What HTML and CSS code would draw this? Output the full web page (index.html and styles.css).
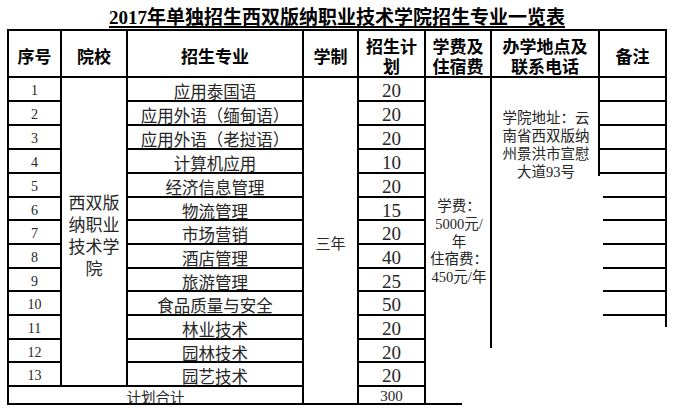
FILE: index.html
```html
<!DOCTYPE html>
<html lang="zh-CN">
<head>
<meta charset="utf-8">
<title>2017年单独招生西双版纳职业技术学院招生专业一览表</title>
<link rel="stylesheet" href="styles.css">
</head>
<body>
<div class="page">
  <h1 class="title"><span class="title-text">2017年单独招生西双版纳职业技术学院招生专业一览表</span></h1>
  <table class="plan">
    <colgroup>
      <col class="c-no"><col class="c-school"><col class="c-major"><col class="c-years"><col class="c-quota"><col class="c-fee"><col class="c-addr"><col class="c-note">
    </colgroup>
    <thead>
      <tr class="head">
        <th class="first">序号</th>
        <th>院校</th>
        <th>招生专业</th>
        <th>学制</th>
        <th>招生计<br>划</th>
        <th>学费及<br>住宿费</th>
        <th>办学地点及<br>联系电话</th>
        <th>备注</th>
      </tr>
    </thead>
    <tbody>
      <tr>
        <td class="no first">1</td>
        <td class="school" rowspan="13">西双版<br>纳职业<br>技术学<br>院</td>
        <td class="major">应用泰国语</td>
        <td class="years" rowspan="14">三年</td>
        <td class="quota">20</td>
        <td class="fee" rowspan="14">学费：<br>5000元/<br>年<br>住宿费：<br>450元/年</td>
        <td class="addr" rowspan="14">学院地址：云<br>南省西双版纳<br>州景洪市宣慰<br>大道93号</td>
        <td class="note"></td>
      </tr>
      <tr>
        <td class="no first">2</td>
        <td class="major">应用外语（缅甸语）</td>
        <td class="quota">20</td>
        <td class="note"></td>
      </tr>
      <tr>
        <td class="no first">3</td>
        <td class="major">应用外语（老挝语）</td>
        <td class="quota">20</td>
        <td class="note"></td>
      </tr>
      <tr>
        <td class="no first">4</td>
        <td class="major">计算机应用</td>
        <td class="quota">10</td>
        <td class="note"></td>
      </tr>
      <tr>
        <td class="no first">5</td>
        <td class="major">经济信息管理</td>
        <td class="quota">20</td>
        <td class="note note-gap"></td>
      </tr>
      <tr class="short">
        <td class="no first">6</td>
        <td class="major">物流管理</td>
        <td class="quota">15</td>
        <td class="note note-gap"></td>
      </tr>
      <tr>
        <td class="no first">7</td>
        <td class="major">市场营销</td>
        <td class="quota">20</td>
        <td class="note note-gap"></td>
      </tr>
      <tr>
        <td class="no first">8</td>
        <td class="major">酒店管理</td>
        <td class="quota">40</td>
        <td class="note note-gap"></td>
      </tr>
      <tr class="short">
        <td class="no first">9</td>
        <td class="major">旅游管理</td>
        <td class="quota">25</td>
        <td class="note note-gap"></td>
      </tr>
      <tr>
        <td class="no first">10</td>
        <td class="major">食品质量与安全</td>
        <td class="quota">50</td>
        <td class="note note-gap"></td>
      </tr>
      <tr>
        <td class="no first">11</td>
        <td class="major">林业技术</td>
        <td class="quota">20</td>
        <td class="note note-stub"></td>
      </tr>
      <tr class="short">
        <td class="no first">12</td>
        <td class="major">园林技术</td>
        <td class="quota">20</td>
        <td class="note note-none"></td>
      </tr>
      <tr>
        <td class="no first">13</td>
        <td class="major">园艺技术</td>
        <td class="quota">20</td>
        <td class="note note-none"></td>
      </tr>
      <tr class="total">
        <td class="total-label first" colspan="3"><div class="clip clip-label">计划合计</div></td>
        <td class="total-quota"><div class="clip clip-num">300</div></td>
      </tr>
    </tbody>
  </table>
</div>
</body>
</html>
```

FILE: styles.css
```css
html, body {
  margin: 0;
  padding: 0;
  background: #ffffff;
}

body {
  font-family: "Liberation Serif", "Noto Sans CJK SC", serif;
  color: #262626;
}

.page {
  width: 660px;
  padding-left: 7px;
}

.title {
  margin: 0;
  box-sizing: border-box;
  height: 29px;
  padding-top: 7px;
  line-height: 22px;
  font-size: 19px;
  font-weight: bold;
  text-align: center;
  color: #000000;
}

.title-text {
  text-decoration: underline;
  text-decoration-thickness: 1.5px;
  text-underline-offset: 2px;
}

.plan {
  table-layout: fixed;
  width: 660px;
  border-collapse: separate;
  border-spacing: 0;
}

.c-no { width: 55px; }
.c-school { width: 66px; }
.c-major { width: 176px; }
.c-years { width: 55px; }
.c-quota { width: 67px; }
.c-fee { width: 66px; }
.c-addr { width: 108px; }
.c-note { width: 67px; }

.plan th,
.plan td {
  padding: 0;
  border: 0 solid #000000;
  border-right-width: 2px;
  border-bottom-width: 2px;
  text-align: center;
}

.plan .first {
  border-left-width: 2px;
}

.head {
  height: 49px;
}

.head th {
  border-top-width: 2px;
  padding-top: 4px;
  vertical-align: middle;
  font-family: "Noto Sans CJK SC", sans-serif;
  font-weight: bold;
  font-size: 17px;
  line-height: 20px;
  color: #000000;
}

.plan tbody tr {
  height: 24px;
}

.plan tbody tr.short {
  height: 23px;
}

.plan tbody tr.total {
  height: 18px;
}

.plan td {
  vertical-align: top;
  padding-top: 5px;
  line-height: 16px;
  white-space: nowrap;
}

.no {
  font-size: 14px;
}

.major {
  font-family: "Noto Sans CJK SC", sans-serif;
  font-size: 16.5px;
}

.quota {
  font-size: 19px;
}

.plan td.school {
  vertical-align: middle;
  padding-top: 7px;
  font-family: "Noto Sans CJK SC", sans-serif;
  font-size: 17px;
  line-height: 22px;
}

.plan td.years {
  vertical-align: middle;
  padding-top: 5px;
  font-family: "Noto Sans CJK SC", sans-serif;
  font-size: 15px;
}

.plan td.fee {
  vertical-align: middle;
  padding-top: 2px;
  font-size: 14.5px;
  line-height: 17.75px;
  border-right-width: 0;
  border-bottom-width: 0;
  background-image: linear-gradient(#000000, #000000), linear-gradient(#000000, #000000);
  background-position: right top, left bottom;
  background-size: 2px 270px, 36px 2px;
  background-repeat: no-repeat;
}

.plan td.addr {
  vertical-align: top;
  padding-top: 31px;
  font-size: 14.5px;
  line-height: 18px;
  border-right-width: 0;
  border-bottom-width: 0;
  background-image: linear-gradient(#000000, #000000);
  background-position: right top;
  background-size: 2px 98px;
  background-repeat: no-repeat;
}

.plan td.note {
  padding: 0;
}

.plan td.note-gap {
  border-bottom-width: 0;
  background-image: linear-gradient(#000000, #000000);
  background-position: right bottom;
  background-size: 62px 2px;
  background-repeat: no-repeat;
}

.plan td.note-stub {
  border-right-width: 0;
  border-bottom-width: 0;
  background-image: linear-gradient(#000000, #000000);
  background-position: right top;
  background-size: 2px 11px;
  background-repeat: no-repeat;
}

.plan td.note-none {
  border-width: 0;
}

.plan td.total-label,
.plan td.total-quota {
  padding: 0;
  vertical-align: top;
}

.clip {
  height: 16px;
  overflow: hidden;
}

.clip-label {
  font-family: "Noto Sans CJK SC", sans-serif;
  font-size: 14.5px;
  line-height: 20px;
}

.clip-num {
  font-size: 15px;
  line-height: 19px;
}
```
